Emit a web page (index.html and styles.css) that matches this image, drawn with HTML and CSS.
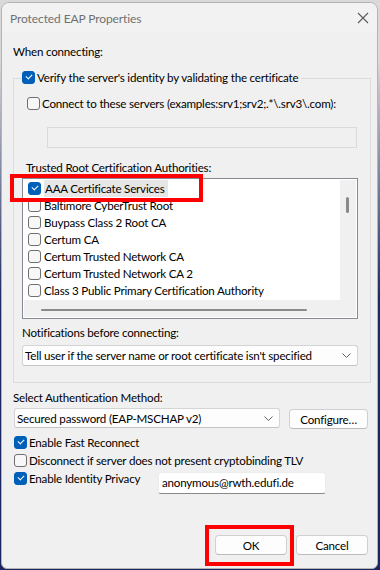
FILE: index.html
```html
<!DOCTYPE html>
<html>
<head>
<meta charset="utf-8">
<link rel="stylesheet" href="styles.css">
</head>
<body>
<div class="window">
  <div class="titlebar">
    <span class="title">Protected EAP Properties</span>
    <svg class="close" width="12" height="12" viewBox="0 0 12 12"><path d="M1 1L11 11M11 1L1 11" stroke="#5a5a5a" stroke-width="1.1" fill="none"/></svg>
  </div>
  <div class="content">
    <div class="label first">When connecting:</div>
    <div class="group">
      <div class="caption"><span class="cb on"></span><span>Verify the server's identity by validating the certificate</span></div>
      <div class="row connect"><span class="cb"></span><span>Connect to these servers (examples:srv1;srv2;.*\.srv3\.com):</span></div>
      <div class="servers"></div>
      <div class="label trusted">Trusted Root Certification Authorities:</div>
      <div class="listbox">
        <div class="items">
          <div class="item"><span class="cb on"></span><span class="sel">AAA Certificate Services</span></div>
          <div class="item"><span class="cb"></span><span>Baltimore CyberTrust Root</span></div>
          <div class="item"><span class="cb"></span><span>Buypass Class 2 Root CA</span></div>
          <div class="item"><span class="cb"></span><span>Certum CA</span></div>
          <div class="item"><span class="cb"></span><span>Certum Trusted Network CA</span></div>
          <div class="item"><span class="cb"></span><span>Certum Trusted Network CA 2</span></div>
          <div class="item"><span class="cb"></span><span>Class 3 Public Primary Certification Authority</span></div>
        </div>
        <div class="vscroll"><div class="vthumb"></div></div>
        <div class="hscroll"><div class="hthumb"></div></div>
      </div>
      <div class="label notif">Notifications before connecting:</div>
      <div class="select wide"><span>Tell user if the server name or root certificate isn't specified</span><svg class="chev" width="9" height="5" viewBox="0 0 9 5"><path d="M0.5 0.5L4.5 4.5L8.5 0.5" stroke="#606060" fill="none"/></svg></div>
    </div>
    <div class="label auth">Select Authentication Method:</div>
    <div class="authrow">
      <div class="select method"><span>Secured password (EAP-MSCHAP v2)</span><svg class="chev" width="9" height="5" viewBox="0 0 9 5"><path d="M0.5 0.5L4.5 4.5L8.5 0.5" stroke="#606060" fill="none"/></svg></div>
      <div class="btn configure">Configure…</div>
    </div>
    <div class="row opt fast"><span class="cb on"></span><span>Enable Fast Reconnect</span></div>
    <div class="row opt"><span class="cb"></span><span>Disconnect if server does not present cryptobinding TLV</span></div>
    <div class="identrow">
      <div class="row opt ident"><span class="cb on"></span><span>Enable Identity Privacy</span></div>
      <div class="anon">anonymous@rwth.edufi.de</div>
    </div>
    <div class="footer">
      <div class="btn">OK</div>
      <div class="btn">Cancel</div>
    </div>
  </div>
  <div class="mark mark-aaa"></div>
  <div class="mark mark-ok"></div>
</div>
</body>
</html>
```
FILE: styles.css
```css
html, body {
  margin: 0;
  padding: 0;
}
body {
  width: 380px;
  height: 570px;
  overflow: hidden;
  background: linear-gradient(to bottom, #d9d9d9 0, #d9d9d9 60px, #1d2a63 300px, #1b2560 100%);
  font-family: Lato, "Liberation Sans", sans-serif;
  font-size: 11.6px;
  letter-spacing: -0.2px;
  color: #000;
}
.window {
  position: relative;
  margin: 2px 0 0 1px;
  width: 377px;
  height: 567px;
  box-sizing: border-box;
  border: 1px solid #b4b4b4;
  border-radius: 8px 8px 6px 6px;
  background: #f0f0f0;
  display: flex;
  flex-direction: column;
  overflow: hidden;
}
.titlebar {
  height: 30px;
  display: flex;
  align-items: center;
  justify-content: space-between;
  padding: 0 8px 0 8px;
  background: #f2f2f2;
  flex: none;
}
.title {
  color: #707070;
  font-size: 12px;
  letter-spacing: -0.1px;
}
.close {
  margin-right: 0;
}
.content {
  flex: 1;
  display: flex;
  flex-direction: column;
  padding: 0 9px 13px 11px;
}
.label {
  line-height: 16px;
  height: 16px;
  white-space: nowrap;
}
.first {
  margin-top: 11px;
}
.group {
  margin-top: 18px;
  width: 358px;
  height: 305px;
  box-sizing: border-box;
  border: 1px solid #dcdcdc;
  display: flex;
  flex-direction: column;
  align-items: flex-start;
  flex: none;
}
.caption {
  margin: -10px 0 0 8px;
  height: 16px;
  display: inline-flex;
  align-items: center;
  gap: 2px;
  padding-right: 3px;
  background: #f0f0f0;
  white-space: nowrap;
}
.row {
  height: 16px;
  display: flex;
  align-items: center;
  gap: 2px;
  white-space: nowrap;
}
.connect {
  margin: 10px 0 0 13px;
}
.servers {
  margin: 16px 0 0 33px;
  width: 310px;
  height: 21px;
  box-sizing: border-box;
  border: 1px solid #dadada;
  background: #f0f0f0;
}
.trusted {
  margin: 12px 0 0 12px;
}
.listbox {
  margin: 2px 0 0 8px;
  width: 336px;
  height: 141px;
  box-sizing: border-box;
  border: 1px solid #868a93;
  padding: 1px;
  background: #fff;
  display: grid;
  grid-template-columns: 1fr 16px;
  grid-template-rows: 1fr 17px;
}
.items {
  overflow: hidden;
  display: flex;
  flex-direction: column;
}
.item {
  height: 17px;
  flex: none;
  display: flex;
  align-items: center;
  padding-left: 4px;
  gap: 3px;
  white-space: nowrap;
}
.sel {
  background: #e6e6e6;
  line-height: 17px;
  padding: 0 2px 0 1px;
  width: 121px;
}
.vscroll {
  background: #f0f0f0;
  position: relative;
}
.vthumb {
  margin: 17px 0 0 6px;
  width: 3px;
  height: 16px;
  border-radius: 2px;
  background: #8a8a8a;
}
.hscroll {
  grid-column: 1 / 3;
  background: #f0f0f0;
  display: flex;
  align-items: center;
}
.hthumb {
  margin: 2px 0 0 17px;
  width: 266px;
  height: 2px;
  border-radius: 1px;
  background: #8a8a8a;
}
.notif {
  margin: 6px 0 0 8px;
}
.select {
  height: 21px;
  box-sizing: border-box;
  border: 1px solid #d4d4d4;
  border-bottom-color: #c4c4c4;
  border-radius: 3px;
  background: #fdfdfd;
  display: flex;
  align-items: center;
  justify-content: space-between;
  padding: 0 6px 0 2px;
  white-space: nowrap;
}
.wide {
  margin: 4px 0 0 8px;
  width: 336px;
}
.auth {
  margin-top: 7px;
}
.authrow {
  margin-top: 2px;
  display: flex;
  align-items: flex-start;
  gap: 9px;
}
.method {
  margin-left: 1px;
  width: 267px;
  height: 20px;
}
.btn {
  width: 72px;
  height: 20px;
  box-sizing: border-box;
  border: 1px solid #d0d0d0;
  border-bottom-color: #bcbcbc;
  border-radius: 4px;
  background: #fdfdfd;
  display: flex;
  align-items: center;
  justify-content: center;
  white-space: nowrap;
}
.configure {
  width: 79px;
  margin-top: 1px;
}
.opt {
  margin-top: 2px;
  margin-left: 1px;
}
.fast {
  margin-top: 5px;
}
.identrow {
  display: flex;
  align-items: flex-start;
}
.ident {
  width: 144px;
}
.anon {
  margin-top: 4px;
  width: 168px;
  height: 22px;
  box-sizing: border-box;
  border: 1px solid #ececec;
  border-bottom: 1px solid #8a8a8a;
  border-radius: 3px;
  background: #fff;
  padding-left: 3px;
  line-height: 20px;
}
.footer {
  margin-top: auto;
  display: flex;
  justify-content: flex-end;
  gap: 9px;
}
.cb {
  width: 13px;
  height: 13px;
  box-sizing: border-box;
  border: 1px solid #6f6f6f;
  border-radius: 3px;
  background: #f7f7f7;
  flex: none;
  position: relative;
}
.cb.on {
  border-color: #005fb8;
  background: #005fb8;
}
.cb.on::after {
  content: "";
  position: absolute;
  left: 3px;
  top: 2px;
  width: 5px;
  height: 3px;
  border-left: 1px solid #fff;
  border-bottom: 1px solid #fff;
  transform: rotate(-45deg);
}
.mark {
  position: absolute;
  border: 4px solid #ff0000;
  box-sizing: border-box;
}
.mark-aaa {
  left: 8px;
  top: 171px;
  width: 193px;
  height: 28px;
}
.mark-ok {
  left: 203px;
  top: 522px;
  width: 89px;
  height: 41px;
}
```
